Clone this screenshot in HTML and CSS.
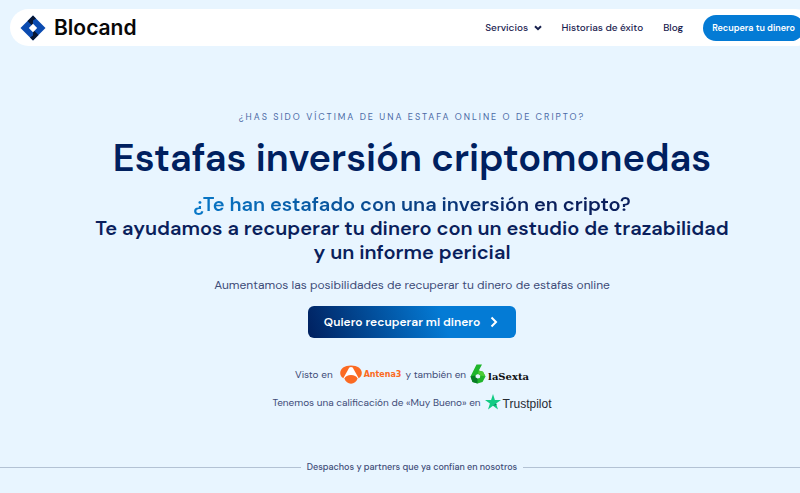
FILE: index.html
```html
<!DOCTYPE html>
<html lang="es">
<head>
    <meta charset="UTF-8">
    <meta name="viewport" content="width=device-width, initial-scale=1">
    <title>Estafas inversión criptomonedas | Blocand</title>
    <link rel="stylesheet" href="styles.css">
</head>
<body>
    <div class="page">
        <header class="header">
            <a href="#" class="logo">
                <svg class="logo-mark" viewBox="0 0 26 26" aria-hidden="true">
                    <path fill="#0b4bb0" d="M13 0.5 25.5 13 13 25.5 0.5 13z"/>
                    <path fill="#071633" d="M7.500 6 13 11.500V5.500L16 3.500 13 0.500z"/>
                    <path fill="#071633" d="M18.500 20 13 14.500V20.500L10 22.500 13 25.500z"/>
                    <path fill="#fff" d="M13 8.800 17.200 13 13 17.200 8.800 13z"/>
                </svg>
                <span>Blocand</span>
            </a>
            <nav class="nav">
                <a href="#">Servicios
                    <svg class="caret" viewBox="0 0 8 6" aria-hidden="true"><path d="M1 1.200 4 4.200 7 1.200"/></svg>
                </a>
                <a href="#">Historias de éxito</a>
                <a href="#">Blog</a>
                <a href="#" class="nav-button">Recupera tu dinero</a>
            </nav>
        </header>

        <main class="hero">
            <p class="eyebrow">¿Has sido víctima de una estafa online o de cripto?</p>
            <h1>Estafas inversión criptomonedas</h1>
            <h2>
                <span class="gradient-text">¿Te han estafado con una inversión en cripto?</span><br>
                Te ayudamos a recuperar tu dinero con un estudio de trazabilidad<br>
                y un informe pericial
            </h2>
            <p class="lead">Aumentamos las posibilidades de recuperar tu dinero de estafas online</p>
            <button type="button" class="cta">
                Quiero recuperar mi dinero
                <svg viewBox="0 0 8 12" aria-hidden="true"><path d="M1.500 1.500 6 6 1.500 10.500"/></svg>
            </button>

            <div class="mentions">
                <div class="mention">
                    <span>Visto en</span>
                    <span class="brand antena">
                        <svg viewBox="0 0 22 19" aria-hidden="true">
                            <path fill="#fb6a22" d="M11 0.500C17.500 0.500 21.800 3.500 21.800 8 21.800 10.500 20.500 12.300 18.300 13.300H3.700C1.500 12.300 0.200 10.500 0.200 8 0.200 3.500 4.500 0.500 11 0.500z"/>
                            <path fill="#fff" d="M9.300 2.600Q11 1.200 12.700 2.600L18.800 13.500H3.200z"/>
                            <path fill="#fb6a22" d="M11 10C14.200 10 16.700 11.500 17.600 13.500 16.500 16.800 14 18.700 11 18.700S5.500 16.800 4.400 13.500C5.300 11.500 7.800 10 11 10z"/>
                        </svg>
                        <b>Antena3</b>
                    </span>
                    <span>y también en</span>
                    <span class="brand sexta">
                        <svg viewBox="0 0 16 20" aria-hidden="true">
                            <path fill="#20b52b" d="M6.500 0.500H12L8.800 6.500 13 7.800 15.500 12.500 12.500 18 7.500 19.500 2.500 18 0.500 12.500z"/>
                            <path fill="#087c25" d="M0.500 12.500 4.800 11.500 7.500 14.500V19.500L2.500 18z"/>
                            <path fill="#4ccc36" d="M8.800 6.500 13 7.800 15.500 12.500 10.800 11.500 8 9.500z"/>
                            <path fill="#e8f5ff" d="M8 10 10.300 11.500 9.800 14 7.500 14.500 5.500 13.300 5.800 11z"/>
                        </svg>
                        <b class="brand-name">laSexta</b>
                    </span>
                </div>
                <div class="mention">
                    <span>Tenemos una calificación de «Muy Bueno» en</span>
                    <span class="brand trustpilot">
                        <svg viewBox="0 0 16 16" aria-hidden="true">
                            <path fill="#12cb83" d="M8 0 9.900 5.900H16L11.100 9.500 13 15.500 8 11.800 3 15.500 4.900 9.500 0 5.900H6.100z"/>
                            <path fill="#087c5b" d="M11.100 9.500 11.600 11 8 11.800z"/>
                        </svg>
                        <span class="brand-name">Trustpilot</span>
                    </span>
                </div>
            </div>
        </main>

        <div class="partners">Despachos y partners que ya confían en nosotros</div>
    </div>
</body>
</html>
```
FILE: styles.css
```css
* {
    box-sizing: border-box;
}

body {
    margin: 0;
    min-height: 100vh;
    overflow-x: hidden;
    background-color: #e8f5ff;
    color: #3e4c78;
    font-family: "DM Sans", Inter, sans-serif;
}

a {
    color: inherit;
    text-decoration: none;
}

/* the page runs a little past the right edge */
.page {
    width: calc(100% + 24px);
    padding-top: 9px;
}

.header {
    display: flex;
    align-items: center;
    justify-content: space-between;
    height: 37px;
    margin: 0 10px;
    padding: 0 10px;
    border-radius: 19px;
    background-color: #ffffff;
}

.logo {
    display: flex;
    align-items: center;
    gap: 8px;
    color: #080808;
    font-family: Inter, sans-serif;
    font-size: 21px;
    font-weight: 600;
}

.logo-mark {
    width: 26px;
    height: 26px;
}

.nav {
    display: flex;
    align-items: center;
    gap: 20px;
    color: #17204d;
    font-size: 10px;
    font-weight: 500;
}

.caret {
    width: 8px;
    height: 6px;
    margin-left: 3px;
    fill: none;
    stroke: #17204d;
    stroke-width: 2;
}

.nav-button {
    padding: 0 9px;
    border-radius: 13px;
    background-color: #047bd5;
    color: #ffffff;
    font-size: 9px;
    font-weight: 600;
    line-height: 26px;
}

.hero {
    display: flex;
    flex-direction: column;
    align-items: center;
    padding-top: 64px;
    text-align: center;
}

.eyebrow {
    margin: 0;
    color: #4a69a5;
    font-size: 9px;
    line-height: 14px;
    letter-spacing: 2px;
    text-transform: uppercase;
}

h1 {
    margin: 10px 0;
    color: #00205f;
    font-size: 38px;
    font-weight: 600;
    line-height: 48px;
}

h2 {
    margin: 0;
    color: #0a1f5c;
    font-size: 20px;
    font-weight: 600;
    line-height: 24px;
}

.gradient-text {
    background: linear-gradient(90deg, #0878c8, #0a1f5c 80%);
    background-clip: text;
    -webkit-background-clip: text;
    color: transparent;
}

.lead {
    margin: 12px 0;
    font-size: 12px;
    line-height: 18px;
}

.cta {
    display: flex;
    align-items: center;
    gap: 10px;
    height: 32px;
    padding: 0 18px 0 16px;
    border: none;
    border-radius: 6px;
    background: linear-gradient(70deg, #00205f, #047bd5 65%);
    color: #ffffff;
    font-family: inherit;
    font-size: 12px;
    font-weight: 600;
    cursor: pointer;
}

.cta svg {
    width: 8px;
    height: 12px;
    fill: none;
    stroke: #ffffff;
    stroke-width: 2;
}

.mentions {
    display: flex;
    flex-direction: column;
    align-items: center;
    gap: 4px;
    margin-top: 24px;
    font-size: 10px;
}

.mention {
    display: flex;
    align-items: center;
    gap: 4px;
    height: 24px;
}

.brand {
    display: flex;
    align-items: center;
    gap: 2px;
}

.brand-name {
    padding-top: 4px;
}

.antena {
    margin-left: 3px;
    color: #fb6a22;
    font-family: "DejaVu Sans", sans-serif;
    font-size: 8px;
}

.antena svg {
    width: 22px;
    height: 19px;
}

.sexta {
    color: #111111;
    font-family: "DejaVu Serif", serif;
    font-size: 10px;
}

.sexta svg {
    width: 16px;
    height: 20px;
}

.trustpilot {
    color: #252a32;
    font-family: "Liberation Sans", Arial, sans-serif;
    font-size: 12px;
}

.trustpilot svg {
    width: 16px;
    height: 16px;
}

.partners {
    display: flex;
    align-items: center;
    gap: 6px;
    margin-top: 45px;
    font-size: 9px;
    font-weight: 500;
    line-height: 16px;
}

.partners::before,
.partners::after {
    content: "";
    flex: 1;
    border-top: 1px solid #b3c2d4;
}
```
